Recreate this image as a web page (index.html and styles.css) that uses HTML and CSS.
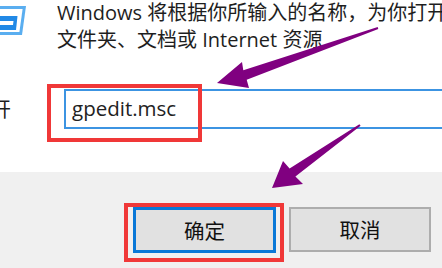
FILE: index.html
```html
<!DOCTYPE html>
<html lang="zh-CN">
<head>
<meta charset="utf-8">
<title>运行</title>
<link rel="stylesheet" href="styles.css">
</head>
<body>
<div class="dialog">
  <section class="content">
    <div class="intro">
      <svg class="run-icon" viewBox="0 0 26 36" width="26" height="36" aria-hidden="true">
        <polygon points="-2,6 26,6 22,35 -2,35" fill="#5aaef0"/>
        <polygon points="-2,9 22.6,9 19.4,32 -2,32" fill="#ffffff"/>
        <polygon points="-2,16 17.5,16 16,30 -2,30" fill="#2189e6"/>
        <polygon points="-2,21 13.5,21 13,25 -2,25" fill="#ffffff"/>
      </svg>
      <p class="desc">Windows 将根据你所输入的名称，为你打开<br>文件夹、文档或 Internet 资源</p>
    </div>
    <div class="open-row">
      <span class="open-label">打开</span>
      <div class="field">gpedit.msc</div>
    </div>
  </section>
  <footer class="actions">
    <button class="btn btn-default">确定</button>
    <button class="btn">取消</button>
  </footer>
  <div class="mark mark-input"></div>
  <div class="mark mark-ok"></div>
  <svg class="arrows" viewBox="0 0 442 268" width="442" height="268" aria-hidden="true">
    <polygon fill="#800080" points="217,83 242,62 243.3,70.3 377.7,27.1 378.3,28.9 246.7,79.7 249,88"/>
    <polygon fill="#800080" points="272,188 283,161 289.6,168.4 359.4,124.2 360.6,125.8 295.4,176.6 303,184"/>
  </svg>
</div>
</body>
</html>
```

FILE: styles.css
```css
html, body {
  margin: 0;
  padding: 0;
}

body {
  width: 442px;
  height: 268px;
  overflow: hidden;
  background: #ffffff;
  font-family: "Open Sans", "Noto Sans CJK SC", sans-serif;
  color: #1e1e1e;
}

.dialog {
  position: relative;
  width: 442px;
  height: 268px;
  overflow: hidden;
  display: flex;
  flex-direction: column;
}

.content {
  height: 172px;
  background: #ffffff;
  flex-shrink: 0;
}

.intro {
  display: flex;
  align-items: flex-start;
  gap: 31px;
}

.run-icon {
  flex-shrink: 0;
  display: block;
}

.desc {
  margin: -1px 0 0;
  font-size: 20px;
  line-height: 27px;
  white-space: nowrap;
}

.open-row {
  display: flex;
  align-items: center;
  margin-top: 36px;
}

.open-label {
  flex-shrink: 0;
  width: 40px;
  margin-left: -29px;
  font-size: 20px;
  line-height: 27px;
  white-space: nowrap;
}

.field {
  flex-shrink: 0;
  box-sizing: border-box;
  width: 420px;
  height: 40px;
  margin-left: 53px;
  border: 2px solid #3c94e2;
  padding-left: 6px;
  font-size: 20.5px;
  line-height: 35px;
  color: #222222;
  background: #ffffff;
}

.actions {
  flex: 1;
  background: #f0f0f0;
  display: flex;
  align-items: flex-start;
  gap: 13px;
  padding: 35px 0 0 133px;
}

.btn {
  box-sizing: border-box;
  width: 142px;
  height: 45px;
  margin: 0;
  padding: 0;
  background: #e1e1e1;
  border: 2px solid #adadad;
  font-family: "Noto Sans CJK SC", sans-serif;
  font-size: 20.5px;
  line-height: 1;
  color: #111111;
}

.btn-default {
  width: 143px;
  height: 46px;
  border: 3px solid #0a78d7;
}

.mark {
  position: absolute;
  box-sizing: border-box;
  border: 4.5px solid #f03838;
}

.mark-input {
  left: 47px;
  top: 84px;
  width: 155px;
  height: 58px;
}

.mark-ok {
  left: 124px;
  top: 203px;
  width: 160px;
  height: 59px;
}

.arrows {
  position: absolute;
  left: 0;
  top: 0;
  pointer-events: none;
}
```
